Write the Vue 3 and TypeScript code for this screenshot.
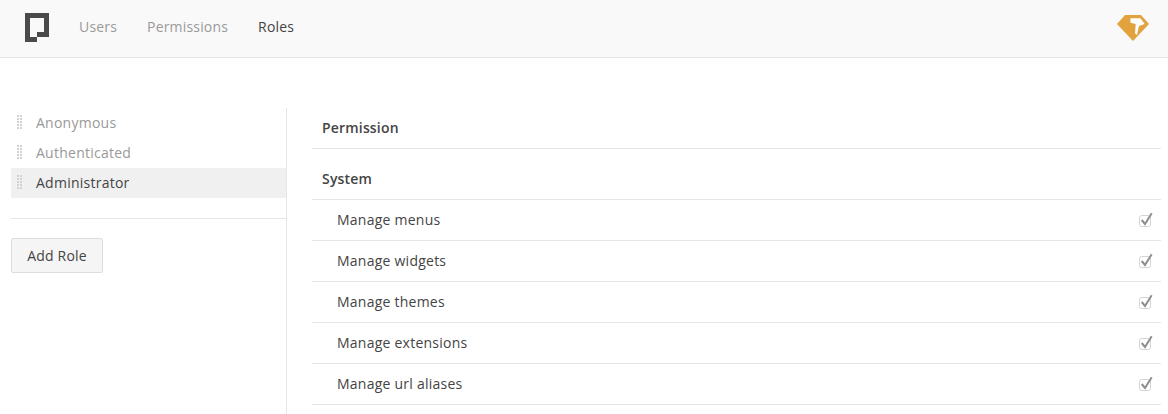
<script setup lang="ts">
const navItems = [
  { label: 'Users', active: false },
  { label: 'Permissions', active: false },
  { label: 'Roles', active: true },
];

const roles = [
  { name: 'Anonymous', active: false },
  { name: 'Authenticated', active: false },
  { name: 'Administrator', active: true },
];

const permissions = ['Manage menus', 'Manage widgets', 'Manage themes', 'Manage extensions', 'Manage url aliases'];
</script>

<template>
  <div class="page">
    <header class="navbar">
      <svg class="logo" width="24" height="29" viewBox="0 0 24 29">
        <path fill="#4a4a4a" fill-rule="evenodd" d="M0 0H24V24H12V29H0ZM5 5V24H12V19H19V5Z" />
      </svg>
      <nav class="nav">
        <a v-for="item in navItems" :key="item.label" class="nav-link" :class="{ active: item.active }">{{ item.label }}</a>
      </nav>
      <svg class="gem" width="32" height="26" viewBox="0 0 32 26">
        <path fill="#e2a33f" d="M8 0H24L32 9 16 26 0 9Z" />
        <path fill="#fff" d="M13.4 3.3H23.4L27.7 9 22 11 20 20 18 18.3 18.7 9 13.4 7.7Z" />
      </svg>
    </header>

    <main class="content">
      <aside class="sidebar">
        <ul class="role-list">
          <li v-for="role in roles" :key="role.name" class="role" :class="{ active: role.active }">
            <span class="grip"></span>
            <span class="role-name">{{ role.name }}</span>
          </li>
        </ul>
        <hr class="divider" />
        <button type="button" class="btn">Add Role</button>
      </aside>

      <section class="table">
        <div class="row head"><span>Permission</span></div>
        <div class="row group"><span>System</span></div>
        <div v-for="perm in permissions" :key="perm" class="row perm">
          <span>{{ perm }}</span>
          <svg class="check" width="14" height="16" viewBox="0 0 14 16">
            <rect x="0.5" y="3.5" width="11" height="11" rx="2" fill="none" stroke="#d4d4d4" />
            <path d="M2.7 8L6 12 12.7 1.3" fill="none" stroke="#8e8e8e" stroke-width="2" />
          </svg>
        </div>
      </section>
    </main>
  </div>
</template>

<style>
html,
body {
  margin: 0;
  overflow: hidden;
}
</style>

<style scoped>
.page {
  height: 414px;
  overflow: hidden;
  background: #fff;
  font-family: "Open Sans", sans-serif;
  font-size: 14px;
  letter-spacing: 0.18px;
  color: #444;
}
.navbar {
  display: flex;
  align-items: center;
  height: 57px;
  padding: 0 19px 0 25px;
  background: #f9f9f9;
  border-bottom: 1px solid #e5e5e5;
}
.logo {
  margin-top: -2px;
}
.gem {
  margin-top: -1px;
}
.nav {
  display: flex;
  gap: 30px;
  margin-left: 30px;
  padding-bottom: 4px;
  flex: 1;
}
.nav-link {
  color: #999;
}
.nav-link.active {
  color: #444;
}
.content {
  display: flex;
  padding: 50px 7px 0 11px;
}
.sidebar {
  width: 275px;
  height: 306px;
  flex-shrink: 0;
  border-right: 1px solid #e5e5e5;
}
.role-list {
  list-style: none;
  margin: 0;
  padding: 0;
}
.role {
  display: flex;
  align-items: center;
  height: 30px;
  padding-left: 6px;
  color: #999;
  letter-spacing: 0.25px;
}
.role.active {
  background: #f0f0f0;
  color: #444;
}
.role-name {
  margin-bottom: 2px;
}
.grip {
  width: 6px;
  height: 15px;
  margin-right: 13px;
  margin-bottom: 2px;
  background-image: radial-gradient(circle at 1px 1px, #d2d2d2 1.3px, transparent 1.4px);
  background-size: 3px 3px;
}
.divider {
  border: 0;
  border-top: 1px solid #e5e5e5;
  margin: 20px 0 19px;
}
.btn {
  display: block;
  width: 92px;
  height: 35px;
  padding: 0;
  background: #f5f5f5;
  border: 1px solid #ddd;
  border-radius: 2px;
  color: #444;
  font: inherit;
  letter-spacing: inherit;
}
.table {
  flex: 1;
  margin-left: 25px;
}
.row {
  display: flex;
  align-items: center;
  border-bottom: 1px solid #e5e5e5;
  padding-left: 10px;
}
.row > span {
  margin-bottom: 2px;
}
.head {
  height: 40px;
  font-weight: 600;
}
.group {
  box-sizing: border-box;
  height: 51px;
  padding-top: 10px;
  font-weight: 600;
}
.perm {
  justify-content: space-between;
  height: 40px;
  padding-left: 25px;
  padding-right: 8px;
  letter-spacing: 0.24px;
}
</style>
